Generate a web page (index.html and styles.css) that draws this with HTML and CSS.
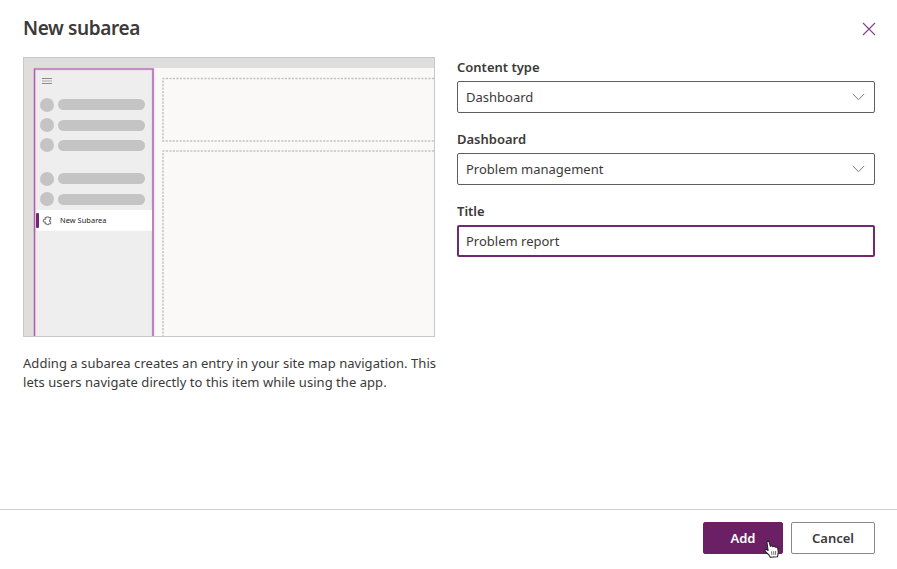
FILE: index.html
```html
<!DOCTYPE html>
<html lang="en">
<head>
<meta charset="utf-8">
<title>New subarea</title>
<link rel="stylesheet" href="styles.css">
</head>
<body>
<div class="dialog">
  <header class="header">
    <h1 class="title">New subarea</h1>
    <button class="close" aria-label="Close">
      <svg width="14" height="14" viewBox="0 0 14 14"><path d="M1 1l12 12M13 1L1 13"/></svg>
    </button>
  </header>
  <main class="body">
    <section class="intro">
      <svg class="preview" viewBox="24 58 410 278">
        <rect x="24" y="58" width="410" height="278" fill="#dfdedd"/>
        <rect x="153" y="68" width="281" height="268" fill="#faf9f8"/>
        <rect x="34" y="68" width="119" height="268" fill="#eeeeee"/>
        <path d="M34.5 340V69H153V340" fill="none" stroke="#dcc3da" stroke-width="2.6"/>
        <path d="M34.5 340V69H153V340" fill="none" stroke="#ad5cab" stroke-width="1.2"/>
        <g stroke="#8c8c8c" stroke-width="1"><path d="M42 78.5h10M42 83.5h10"/><path d="M42 81h10" stroke="#a8a8a8"/></g>
        <g fill="#c4c4c4">
          <circle cx="47" cy="105" r="7"/><rect x="58" y="99" width="87" height="11" rx="5.5"/>
          <circle cx="47" cy="125" r="7"/><rect x="58" y="120" width="87" height="11" rx="5.5"/>
          <circle cx="47" cy="145" r="7"/><rect x="58" y="140" width="87" height="11" rx="5.5"/>
          <circle cx="47" cy="179" r="7"/><rect x="58" y="173" width="87" height="11" rx="5.5"/>
          <circle cx="47" cy="199" r="7"/><rect x="58" y="194" width="87" height="11" rx="5.5"/>
        </g>
        <rect x="36" y="210" width="116" height="20.7" fill="#fff"/>
        <rect x="36" y="213" width="3" height="15" rx="1" fill="#742774"/>
        <path d="M45.2 217.6h1.2a1.4 1.4 0 0 1 2.6 0h1.6v2a1.1 1.1 0 0 0 0 2.2v2H49a1.4 1.4 0 0 1-2.6 0h-1.2V222a1.4 1.4 0 1 1 0-2.6z" fill="none" stroke="#777" stroke-width="1.1"/>
        <text class="preview-label" x="60" y="223" textLength="46.5">New Subarea</text>
        <g fill="none" stroke="#c4c3c2" stroke-width="1.5" stroke-dasharray="2.2 1.3">
          <path d="M434 78.6H163V141H434"/>
          <path d="M434 151H163V336"/>
        </g>
      </svg>
      <p class="description">Adding a subarea creates an entry in your site map navigation. This<br>lets users navigate directly to this item while using the app.</p>
    </section>
    <form class="fields">
      <div class="field">
        <span class="label">Content type</span>
        <div class="input"><span>Dashboard</span><svg width="13" height="8" viewBox="0 0 13 8"><path d="M.8 1l5.7 5.7L12.2 1"/></svg></div>
      </div>
      <div class="field">
        <span class="label">Dashboard</span>
        <div class="input"><span>Problem management</span><svg width="13" height="8" viewBox="0 0 13 8"><path d="M.8 1l5.7 5.7L12.2 1"/></svg></div>
      </div>
      <div class="field">
        <span class="label">Title</span>
        <div class="input focused"><span>Problem report</span></div>
      </div>
    </form>
  </main>
  <footer class="footer">
    <button class="button primary">Add
      <svg class="cursor" width="16" height="18" viewBox="0 0 16 18"><path d="M4.1 10.5L3 2.8C2.7.9 4.7.5 5.2 2.2L6.4 6.4C7.4 5.3 8.5 5.8 8.8 6.7 9.7 5.8 11 6.2 11.2 7.2 12.4 6.6 13.6 7.4 13.9 8.8L14.3 12.6 13.5 16.8 6.3 17.3 4.8 14.8 1.3 11.5C.2 10.1 1.7 8.8 3 9.8z" fill="#fff" stroke="#222" stroke-width="1.1" stroke-linejoin="round"/><path d="M7.5 11.3l.4 3.7M9.6 11.1l.3 3.8M11.6 11v3.8" stroke="#333" stroke-width=".7"/></svg>
    </button>
    <button class="button">Cancel</button>
  </footer>
</div>
</body>
</html>
```

FILE: styles.css
```css
* { box-sizing: border-box; }

body {
  margin: 0;
  font-family: "Noto Sans", "Open Sans", sans-serif;
  font-size: 13px;
  color: #3b3a39;
  background: #fff;
}

.dialog {
  display: flex;
  flex-direction: column;
  height: 569px;
}

.header {
  display: flex;
  justify-content: space-between;
  align-items: center;
  height: 57px;
  padding: 0 21.5px 0 23px;
}

.title {
  margin: -2px 0 0;
  font-size: 19px;
  line-height: 26px;
  font-weight: 600;
  letter-spacing: -0.38px;
  white-space: nowrap;
}

.close {
  display: flex;
  padding: 0;
  border: 0;
  background: none;
}

.close svg {
  fill: none;
  stroke: #85408a;
  stroke-width: 1.1;
}

.body {
  display: flex;
  flex: 1;
  gap: 22px;
  padding-left: 23px;
}

.intro { width: 412px; }

.preview {
  display: block;
  width: 412px;
  height: 280px;
  border: 1px solid #c8c8c8;
}

.preview-label {
  font-size: 7.4px;
  fill: #222;
}

.description {
  margin: 17px 0 0;
  line-height: 19px;
  letter-spacing: 0.042px;
  white-space: nowrap;
}

.fields {
  display: flex;
  flex-direction: column;
  gap: 16px;
  width: 418px;
}

.label {
  display: block;
  height: 24px;
  line-height: 20px;
  font-weight: 600;
}

.input {
  display: flex;
  justify-content: space-between;
  align-items: center;
  height: 32px;
  padding: 0 9px 0 8px;
  border: 1px solid #605e5c;
  border-radius: 2px;
}

.input svg {
  fill: none;
  stroke: #797775;
}

.input.focused {
  padding-left: 7px;
  border: 2px solid #742774;
}

.footer {
  display: flex;
  justify-content: flex-end;
  gap: 8px;
  height: 60px;
  padding: 12px 22px 0 0;
  border-top: 1px solid #d0d0d0;
}

.button {
  position: relative;
  width: 84px;
  height: 32px;
  padding: 0;
  border: 1px solid #8a8886;
  border-radius: 2px;
  background: #fff;
  color: #3b3a39;
  font: 600 13px "Noto Sans", "Open Sans", sans-serif;
}

.primary {
  width: 80px;
  border-color: #6b2066;
  background: #6b2066;
  color: #fff;
}

.cursor {
  position: absolute;
  left: 60px;
  top: 17px;
}
```
